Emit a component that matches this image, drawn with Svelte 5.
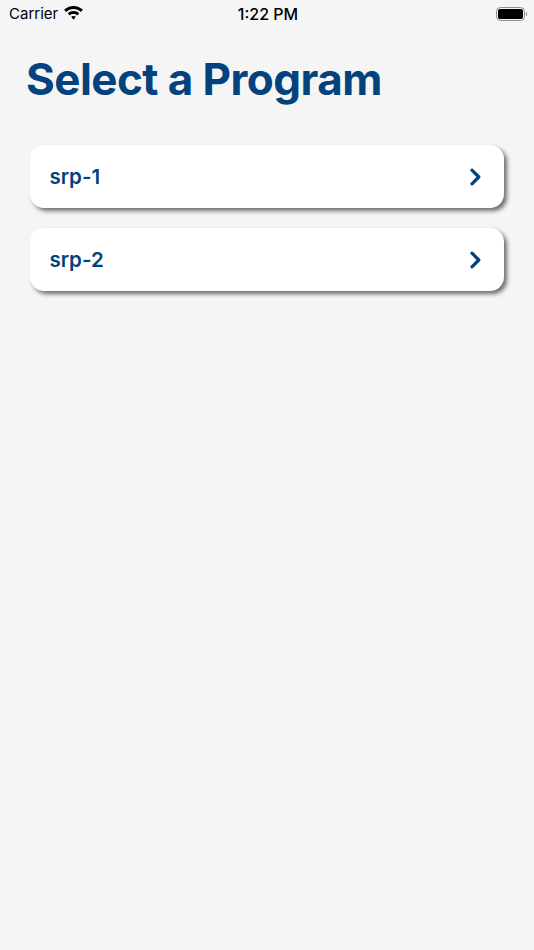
<script lang="ts">
  const programs = ['srp-1', 'srp-2'];
</script>

<div class="screen">
  <div class="status-bar">
    <div class="status-left">
      <span class="carrier">Carrier</span>
      <svg class="wifi" width="19" height="14" viewBox="0 0 19 14">
        <path d="M9.500 0c3.600 0 6.900 1.400 9.400 3.700l-2 2.200C14.900 4.100 12.300 3 9.500 3S4.100 4.100 2.100 5.900l-2-2.200C2.600 1.400 5.900 0 9.500 0z" fill="#000"/>
        <path d="M9.500 5c2.200 0 4.200.8 5.700 2.200l-2 2.200c-1-.9-2.300-1.400-3.700-1.400s-2.700.5-3.700 1.400l-2-2.200C5.300 5.800 7.300 5 9.500 5z" fill="#000"/>
        <path d="M9.500 10c.9 0 1.700.3 2.300.8L9.500 13.800l-2.300-3c.6-.5 1.400-.8 2.300-.8z" fill="#000"/>
      </svg>
    </div>
    <span class="time">1:22 PM</span>
    <div class="status-right">
      <div class="battery"><div class="battery-fill"></div></div>
      <div class="battery-cap"></div>
    </div>
  </div>

  <h1>Select a Program</h1>

  <div class="list">
    {#each programs as program}
      <div class="card">
        <span class="name">{program}</span>
        <svg class="chevron" width="14" height="18" viewBox="0 0 14 18">
          <path d="M3 2.200l6.800 6.800-6.800 6.800" fill="none" stroke="#03427c" stroke-width="3.200" stroke-linecap="round" stroke-linejoin="round"/>
        </svg>
      </div>
    {/each}
  </div>
</div>

<style>
  :global(body) {
    margin: 0;
    background: #f5f5f5;
  }

  .screen {
    height: 950px;
    background: #f5f5f5;
    font-family: Inter, "Liberation Sans", sans-serif;
    overflow: hidden;
  }

  .status-bar {
    height: 27px;
    display: grid;
    grid-template-columns: 1fr auto 1fr;
    align-items: center;
    padding: 0 7px 0 9px;
    color: #000;
  }

  .status-left {
    display: flex;
    align-items: center;
    gap: 6px;
  }

  .carrier {
    font-size: 15px;
  }

  .wifi {
    margin-top: -1px;
  }

  .time {
    font-size: 16px;
    font-weight: 500;
  }

  .status-right {
    display: flex;
    align-items: center;
    justify-content: flex-end;
    gap: 1px;
  }

  .battery {
    box-sizing: border-box;
    width: 29px;
    height: 14px;
    border: 1.500px solid #8e8e8e;
    border-radius: 4.500px;
    padding: 1px;
  }

  .battery-fill {
    height: 100%;
    background: #000;
    border-radius: 2px;
  }

  .battery-cap {
    width: 1.500px;
    height: 4px;
    background: #8e8e8e;
    border-radius: 0 1px 1px 0;
  }

  h1 {
    margin: 26px 0 0 26px;
    font-size: 44px;
    line-height: 53px;
    font-weight: 700;
    color: #03427c;
    letter-spacing: -0.56px;
  }

  .list {
    margin: 39px 30px 0;
    display: flex;
    flex-direction: column;
    gap: 20px;
  }

  .card {
    height: 63px;
    background: #fff;
    border-radius: 14px;
    box-shadow: 3px 3px 4px rgba(0, 0, 0, 0.55);
    display: flex;
    align-items: center;
    justify-content: space-between;
    padding: 0 21px 0 19.500px;
  }

  .name {
    font-size: 20.500px;
    font-weight: 600;
    color: #03427c;
    margin-top: -1px;
  }
</style>
